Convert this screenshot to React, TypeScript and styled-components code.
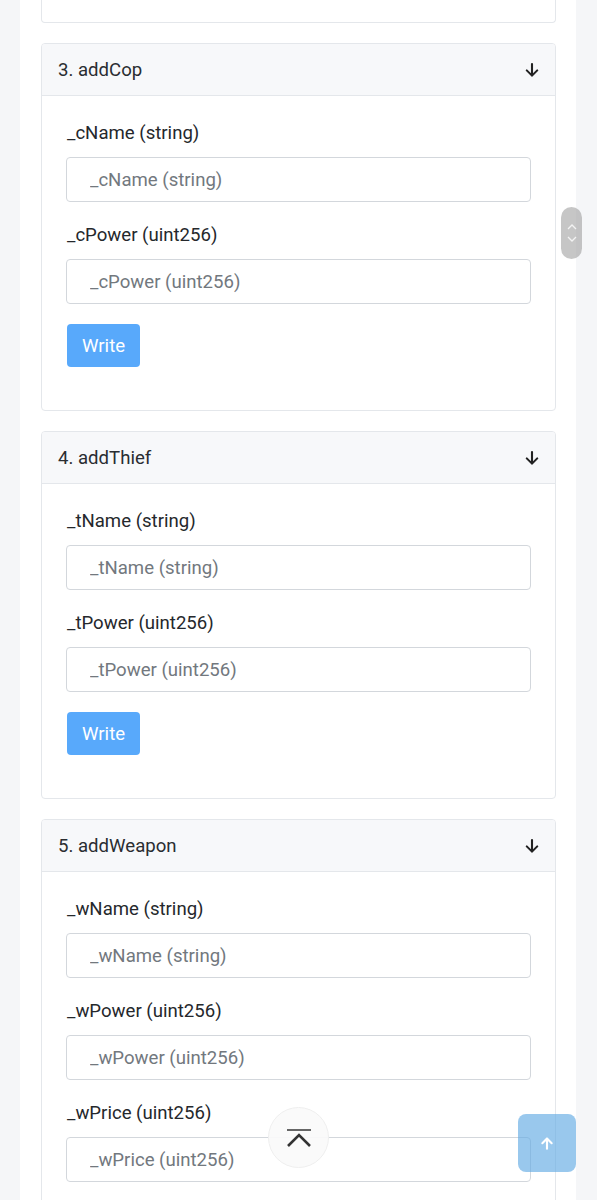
import React from "react";
import styled, { createGlobalStyle } from "styled-components";

const Global = createGlobalStyle`
  html, body { margin: 0; padding: 0; background: #f5f6f8; }
  body { font-family: Roboto, "Noto Sans", "Liberation Sans", sans-serif; color: #212529; }
  * { box-sizing: border-box; }
`;

const Panel = styled.main`
  margin: 0 21px 0 20px;
  background: #ffffff;
  min-height: 1200px;
  padding: 0 20px 0 21px;
  display: flex;
  flex-direction: column;
  gap: 20px;
`;

const CardTail = styled.div`
  height: 23px;
  border: 1px solid #e4e7eb;
  border-top: 0;
  border-radius: 0 0 4px 4px;
  background: #fff;
`;

const Card = styled.section`
  border: 1px solid #e4e7eb;
  border-radius: 4px;
  background: #fff;
  overflow: hidden;
`;

const Header = styled.header`
  height: 52px;
  background: #f7f8fa;
  border-bottom: 1px solid #e4e7eb;
  display: flex;
  align-items: center;
  justify-content: space-between;
  padding: 0 14px 0 16px;
  font-size: 18.6px;
  color: #2a2d31;
`;

const Body = styled.div`
  padding: 24px 24px 43px 24px;
  display: flex;
  flex-direction: column;
`;

const Field = styled.div`
  display: flex;
  flex-direction: column;
  gap: 12px;
  margin-bottom: 20px;
`;

const Label = styled.label`
  font-size: 18.6px;
  line-height: 24px;
  padding: 1px 0 0 1px;
  color: #25282c;
`;

const Input = styled.input`
  height: 45px;
  width: 100%;
  border: 1px solid #d3d7dc;
  border-radius: 4px;
  padding: 0 23px;
  font-family: inherit;
  font-size: 18.6px;
  color: #212529;
  background: #fff;
  outline: none;
  &::placeholder { color: #72787e; }
`;

const WriteButton = styled.button`
  align-self: flex-start;
  margin-left: 1px;
  height: 43px;
  padding: 0 15px;
  border: 0;
  border-radius: 4px;
  background: #58a9fb;
  color: #fff;
  font-family: inherit;
  font-size: 18.6px;
`;

const ScrollPill = styled.div`
  position: fixed;
  left: 561px;
  top: 207px;
  width: 21px;
  height: 52px;
  border-radius: 11px;
  background: rgba(160, 160, 160, 0.6);
  display: flex;
  flex-direction: column;
  align-items: center;
  justify-content: center;
  gap: 6px;
`;

const TopCircle = styled.div`
  position: fixed;
  left: 268px;
  top: 1107px;
  width: 61px;
  height: 61px;
  border-radius: 50%;
  background: rgba(250, 250, 250, 0.92);
  border: 1px solid #eeeeee;
  display: flex;
  align-items: center;
  justify-content: center;
`;

const UpButton = styled.div`
  position: fixed;
  left: 518px;
  top: 1114px;
  width: 58px;
  height: 58px;
  border-radius: 8px;
  background: rgba(98, 170, 228, 0.65);
  display: flex;
  align-items: center;
  justify-content: center;
`;

const DownArrow = () => (
  <svg width="18" height="18" viewBox="0 0 24 24" fill="none" stroke="#222" strokeWidth="2.8" strokeLinecap="round" strokeLinejoin="round">
    <path d="M12 4v15" />
    <path d="M5 12.5l7 7 7-7" />
  </svg>
);

type Method = { title: string; params: string[]; button?: boolean };

const methods: Method[] = [
  { title: "3. addCop", params: ["_cName (string)", "_cPower (uint256)"], button: true },
  { title: "4. addThief", params: ["_tName (string)", "_tPower (uint256)"], button: true },
  { title: "5. addWeapon", params: ["_wName (string)", "_wPower (uint256)", "_wPrice (uint256)"] },
];

export default function App() {
  return (
    <>
      <Global />
      <Panel>
        <CardTail />
        {methods.map((m) => (
          <Card key={m.title}>
            <Header>
              <span>{m.title}</span>
              <DownArrow />
            </Header>
            <Body>
              {m.params.map((p) => (
                <Field key={p}>
                  <Label>{p}</Label>
                  <Input placeholder={p} />
                </Field>
              ))}
              {m.button && <WriteButton>Write</WriteButton>}
            </Body>
          </Card>
        ))}
      </Panel>
      <ScrollPill>
        <svg width="10" height="7" viewBox="0 0 10 7" fill="none" stroke="rgba(255,255,255,0.8)" strokeWidth="1.3">
          <path d="M1 6l4-4 4 4" />
        </svg>
        <svg width="10" height="7" viewBox="0 0 10 7" fill="none" stroke="rgba(255,255,255,0.8)" strokeWidth="1.3">
          <path d="M1 1l4 4 4-4" />
        </svg>
      </ScrollPill>
      <TopCircle>
        <svg width="26" height="20" viewBox="0 0 26 20" fill="none" strokeLinecap="butt">
          <path d="M1 2h24" stroke="#555" strokeWidth="1.8" />
          <path d="M2 18l11-11 11 11" stroke="#333" strokeWidth="2.6" />
        </svg>
      </TopCircle>
      <UpButton>
        <svg width="14" height="15" viewBox="0 0 24 24" fill="none" stroke="#fff" strokeWidth="3.6" strokeLinecap="round" strokeLinejoin="round">
          <path d="M12 21V4" />
          <path d="M4 11.5l8-8 8 8" />
        </svg>
      </UpButton>
    </>
  );
}
